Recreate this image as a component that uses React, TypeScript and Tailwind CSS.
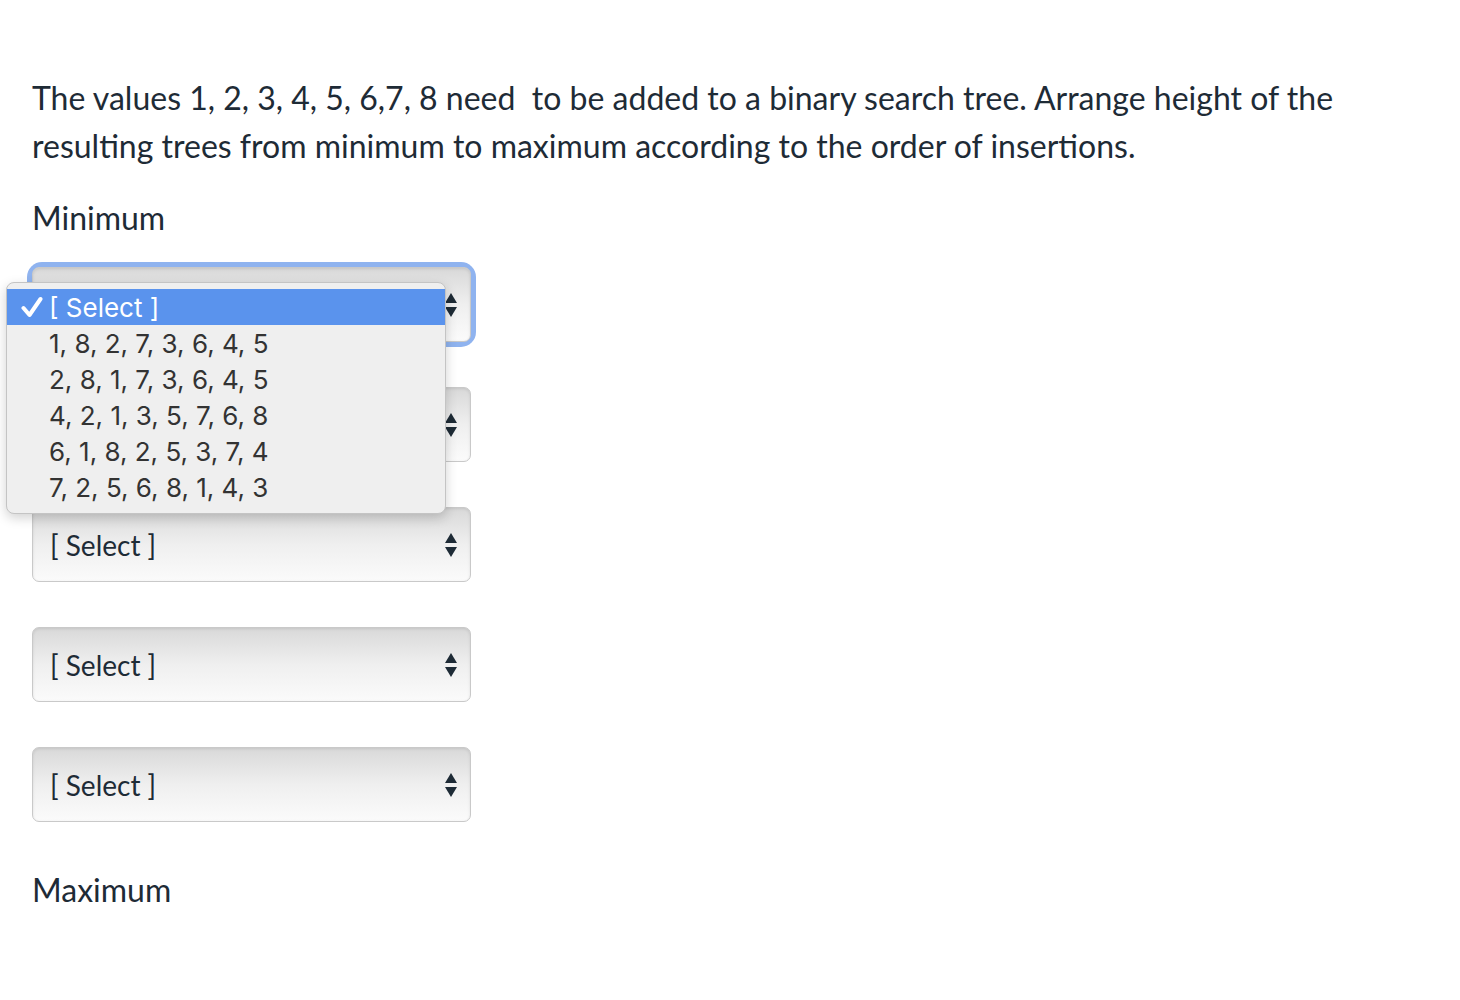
import React from "react";

const options = [
  "1, 8, 2, 7, 3, 6, 4, 5",
  "2, 8, 1, 7, 3, 6, 4, 5",
  "4, 2, 1, 3, 5, 7, 6, 8",
  "6, 1, 8, 2, 5, 3, 7, 4",
  "7, 2, 5, 6, 8, 1, 4, 3",
];

function Arrows() {
  return (
    <svg width="14" height="26" viewBox="0 0 14 26" className="shrink-0">
      <path d="M7 1 L13 11 L1 11 Z" fill="#1e2b36" />
      <path d="M7 25 L13 15 L1 15 Z" fill="#1e2b36" />
    </svg>
  );
}

function SelectBox({ label = "[ Select ]" }: { label?: string }) {
  return (
    <div className="w-[439px] h-[75px] rounded-[7px] border border-[#c9c9c9] bg-gradient-to-b from-[#d9d9d9] via-[#efefef] to-[#fbfbfb] shadow-[inset_0_1px_3px_rgba(0,0,0,0.10)] flex items-center justify-between pl-[17px] pr-[12px]">
      <span className="text-[28px] text-[#1e2b36]">{label}</span>
      <Arrows />
    </div>
  );
}

export default function App() {
  return (
    <div
      className="min-h-[1000px] bg-white text-[#2d3b45] pl-[32px] pt-[74px]"
      style={{ fontFamily: "Lato, 'Open Sans', sans-serif" }}
    >
      <p className="text-[32px] leading-[48px] text-[#1e2b36] w-[1350px]">
        The values 1, 2, 3, 4, 5, 6,7, 8 need&nbsp; to be added to a binary search tree. Arrange height of the resulting
        trees from minimum to maximum according to the order of insertions.
      </p>
      <p className="text-[32px] leading-[48px] text-[#1e2b36] mt-[24px]">Minimum</p>

      <div className="relative mt-[25px] flex flex-col gap-[45px]">
        <div className="rounded-[10px] ring-[5px] ring-[#8fb3ef] w-[439px]">
          <SelectBox label="" />
        </div>
        <SelectBox />
        <SelectBox />
        <SelectBox />
        <SelectBox />

        <div
          className="absolute left-[-26px] top-[15px] w-[440px] rounded-[8px] bg-[#efefef] border border-[#c4c4c4] shadow-[0_4px_12px_rgba(0,0,0,0.18)] pt-[6px] pb-[8px]"
          style={{ fontFamily: "Inter, 'Liberation Sans', sans-serif" }}
        >
          <div className="h-[36px] bg-[#5a93ed] flex items-center text-white text-[26px]">
            <span className="w-[42px] flex justify-end pr-[6px]">
              <svg width="22" height="22" viewBox="0 0 22 22">
                <path d="M2.5 12 L8.5 19 L19.5 3" stroke="white" strokeWidth="4" fill="none" strokeLinecap="round" strokeLinejoin="round" />
              </svg>
            </span>
            <span>[ Select ]</span>
          </div>
          {options.map((o) => (
            <div key={o} className="h-[36px] flex items-center pl-[42px] text-[26px] text-[#333333]">
              {o}
            </div>
          ))}
        </div>
      </div>

      <p className="text-[32px] leading-[48px] text-[#1e2b36] mt-[44px]">Maximum</p>
    </div>
  );
}
